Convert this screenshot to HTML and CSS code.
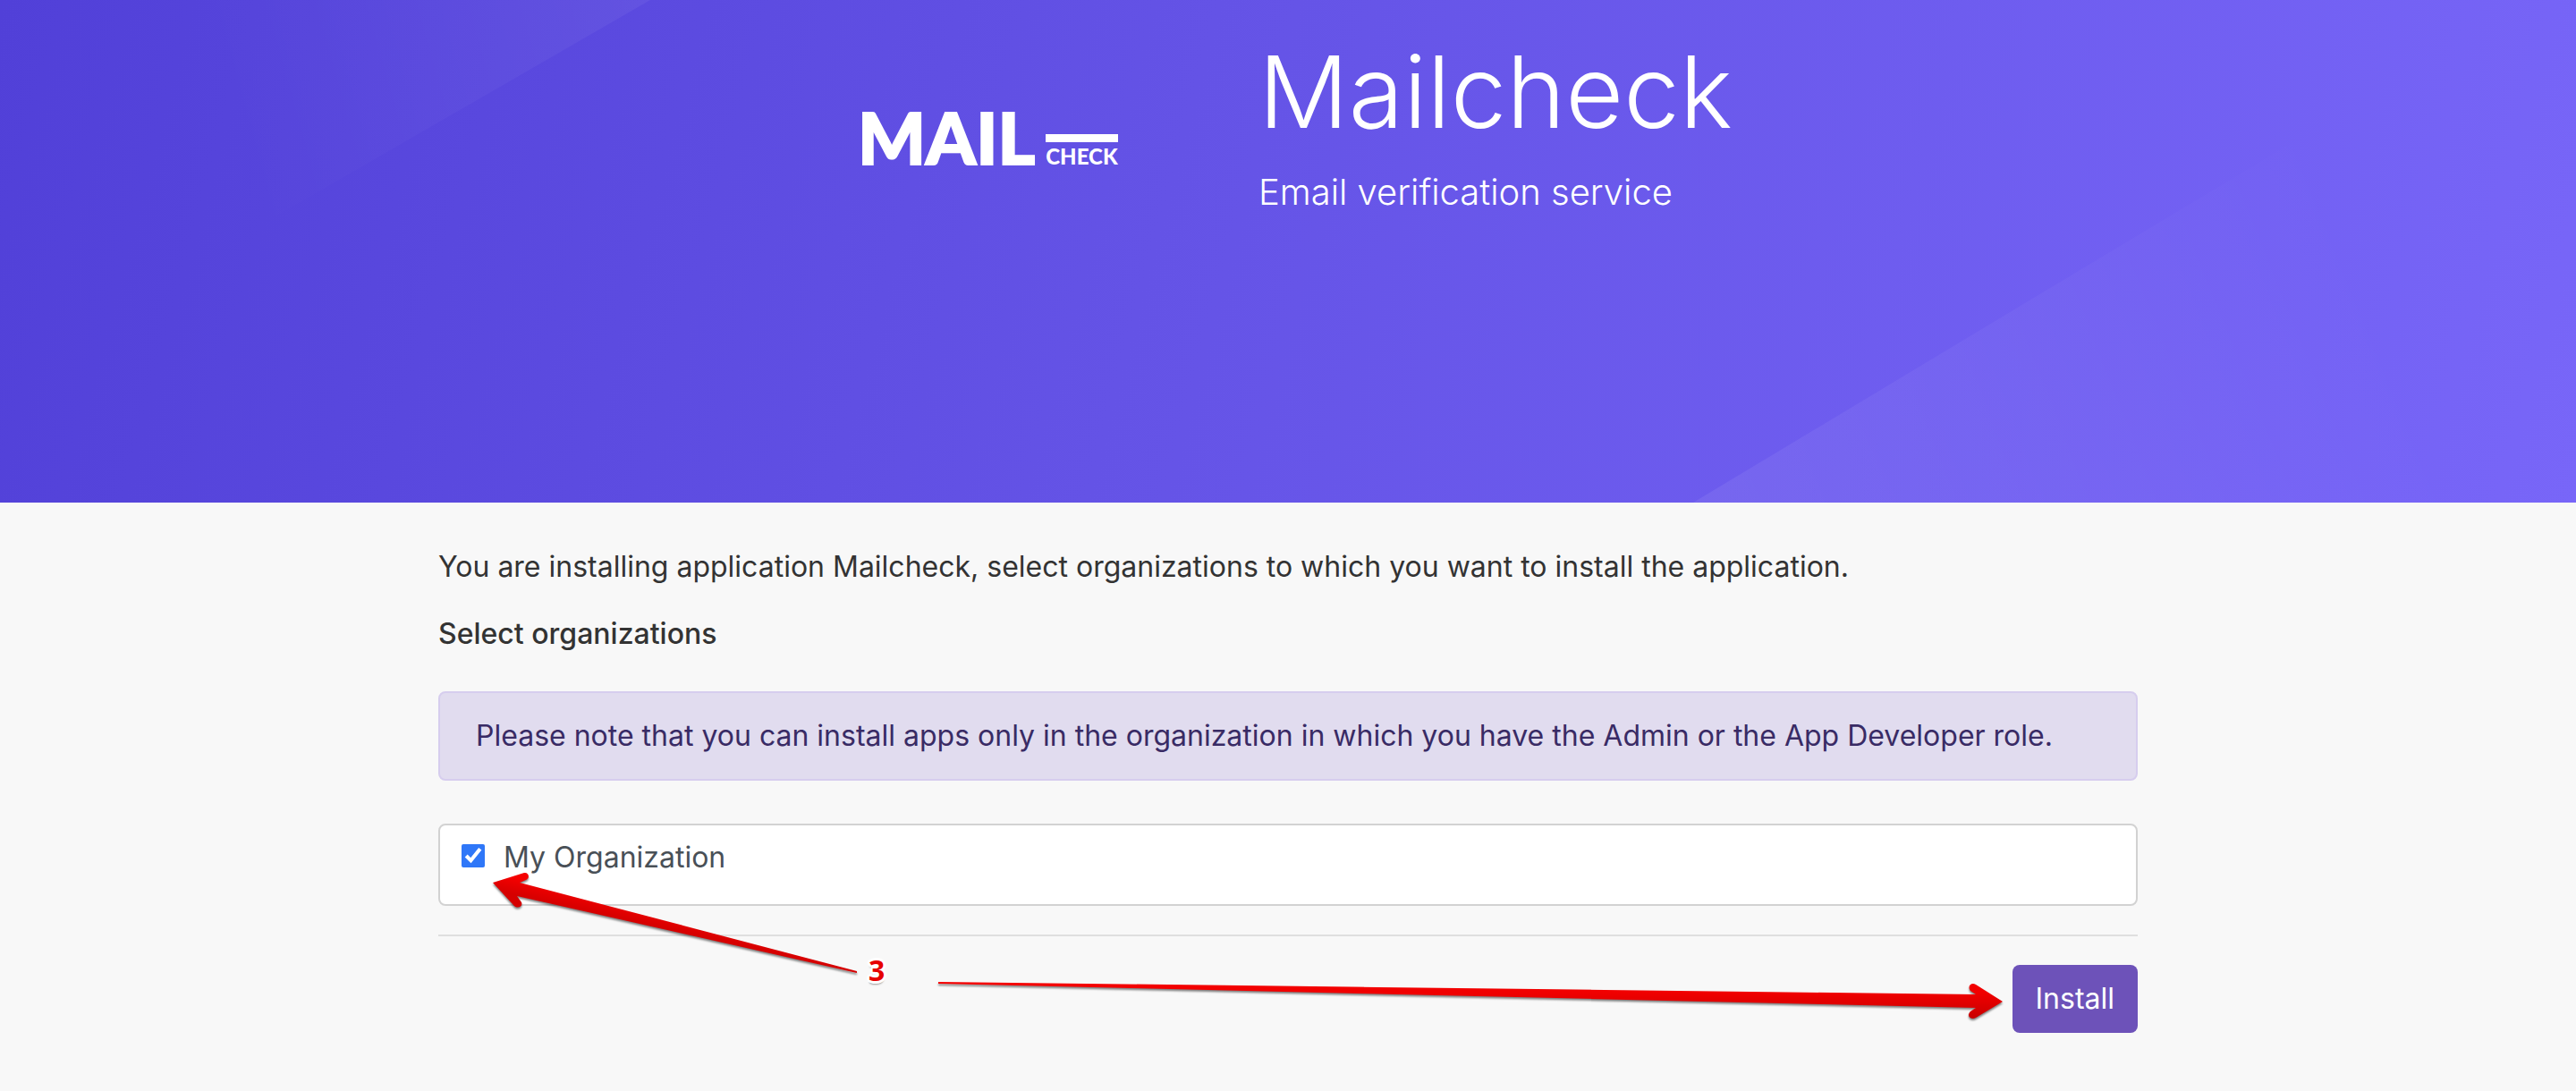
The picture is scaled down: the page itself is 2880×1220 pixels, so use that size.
FILE: index.html
```html
<!DOCTYPE html>
<html lang="en">
<head>
<meta charset="utf-8">
<title>Install Mailcheck</title>
<link rel="stylesheet" href="styles.css">
</head>
<body>
<header class="hero">
  <svg class="hero-shapes" viewBox="0 0 2880 562" preserveAspectRatio="none" aria-hidden="true">
    <defs>
      <linearGradient id="fadeLeft" gradientUnits="userSpaceOnUse" x1="727" y1="0" x2="250" y2="130">
        <stop offset="0" stop-color="#fff" stop-opacity=".05"/>
        <stop offset="1" stop-color="#fff" stop-opacity="0"/>
      </linearGradient>
      <linearGradient id="fadeRight" gradientUnits="userSpaceOnUse" x1="1900" y1="562" x2="2640" y2="260">
        <stop offset="0" stop-color="#fff" stop-opacity=".07"/>
        <stop offset="1" stop-color="#fff" stop-opacity="0"/>
      </linearGradient>
    </defs>
    <path d="M0 0H727L0 420Z" fill="url(#fadeLeft)"/>
    <path d="M1893 562L2828 0H2880V562Z" fill="url(#fadeRight)"/>
  </svg>
  <div class="hero-inner">
    <div class="logo">
      <span class="logo-main">MAIL</span>
      <span class="logo-side">CHECK</span>
    </div>
    <div class="hero-text">
      <h1>Mailcheck</h1>
      <p>Email verification service</p>
    </div>
  </div>
</header>
<main class="content">
  <p class="intro">You are installing application Mailcheck, select organizations to which you want to install the application.</p>
  <h2>Select organizations</h2>
  <div class="alert">Please note that you can install apps only in the organization in which you have the Admin or the App Developer role.</div>
  <form class="install-form">
    <div class="org-card">
      <input type="checkbox" id="org" checked>
      <label for="org">My Organization</label>
    </div>
    <hr>
    <div class="actions">
      <button type="button">Install</button>
    </div>
    <svg class="arrow arrow-left" width="480" height="170" viewBox="0 0 480 170" aria-hidden="true">
      <defs>
        <linearGradient id="shadeLeft" gradientUnits="userSpaceOnUse" x1="264" y1="100" x2="260" y2="118">
          <stop offset="0" stop-color="#f50000"/>
          <stop offset="1" stop-color="#d60000"/>
        </linearGradient>
      </defs>
      <path d="M61 66L96 55C101 54 103 61 98 63L91 66L468 165V167L88 81L93 88C95 93 88 96 84 91Z" fill="url(#shadeLeft)"/>
    </svg>
    <span class="step">3</span>
    <svg class="arrow arrow-right" width="1200" height="50" viewBox="0 0 1200 50" aria-hidden="true">
      <defs>
        <linearGradient id="shadeRight" x1="0" y1="0" x2="0" y2="1">
          <stop offset="0" stop-color="#f50000"/>
          <stop offset=".3" stop-color="#f00000"/>
          <stop offset="1" stop-color="#c80000"/>
        </linearGradient>
      </defs>
      <path d="M10 2L1170 16L1164 12C1160 7 1165 2 1170 5L1200 24L1170 42C1164 45 1159 40 1164 35L1170 31L10 4Z" fill="url(#shadeRight)"/>
    </svg>
  </form>
</main>
</body>
</html>
```
FILE: styles.css
```css
* { box-sizing: border-box; }

body {
  margin: 0;
  background: #f8f8f8;
  color: #333;
  font-family: Inter, "Liberation Sans", sans-serif;
  font-size: 32px;
  line-height: 48px;
}

h1, h2, p { margin: 0; }

.hero {
  position: relative;
  min-height: 562px;
  padding: 36px 0;
  background: linear-gradient(105deg, #5140d8 0%, #6453e6 45%, #7866f8 100%);
  color: #fff;
}

.hero-shapes {
  position: absolute;
  inset: 0;
  width: 100%;
  height: 100%;
}

.hero-inner {
  position: relative;
  display: grid;
  grid-template-columns: 384px 1fr;
  column-gap: 60px;
  max-width: 1954px;
  margin: 0 auto;
  padding-left: 496px;
}

.logo {
  display: flex;
  align-items: flex-end;
  gap: 12px;
  height: 155px;
  font-family: Lato, sans-serif;
  font-weight: 900;
}

.logo-main {
  font-size: 80px;
  line-height: 76px;
  -webkit-text-stroke: 2px #fff;
}

.logo-side {
  border-top: 9px solid #fff;
  font-size: 24px;
  line-height: 32px;
}

.hero-text {
  padding-left: 4px;
}

.hero-text h1 {
  font-size: 112px;
  font-weight: 300;
  line-height: 132px;
}

.hero-text p {
  margin-top: 17px;
  font-size: 40px;
  font-weight: 300;
  line-height: 60px;
}

.content {
  max-width: 1960px;
  margin: 0 auto;
  padding: 48px 30px 64px;
}

.content h2 {
  margin-top: 27px;
  font-size: 32px;
  font-weight: 500;
  line-height: 48px;
}

.alert {
  margin-top: 40px;
  padding: 24px 40px;
  border: 2px solid #d6cdee;
  border-radius: 8px;
  background: #e1dcef;
  color: #392b65;
}

.install-form {
  position: relative;
  margin-top: 48px;
}

.org-card {
  display: flex;
  align-items: flex-start;
  gap: 21px;
  min-height: 92px;
  padding: 12px 24px;
  border: 2px solid #d2d2d2;
  border-radius: 8px;
  background: #fff;
  color: #495057;
}

.org-card input {
  width: 26px;
  height: 26px;
  margin: 9px 0;
  accent-color: #2f77f8;
}

.install-form hr {
  margin: 32px 0;
  border: 0;
  border-top: 2px solid #dfdfdf;
}

.actions {
  display: flex;
  justify-content: flex-end;
}

.actions button {
  padding: 14px 26px;
  border: 0;
  border-radius: 8px;
  background: #6d52b9;
  color: #fff;
  font: inherit;
}

.arrow {
  position: absolute;
  overflow: visible;
  filter: drop-shadow(0 2px 1px rgba(0, 0, 0, .5));
  pointer-events: none;
}

.arrow-left { left: 0; top: 0; }

.arrow-right { right: 151px; top: 175px; }

.step {
  position: absolute;
  left: 481px;
  top: 140px;
  color: #e60000;
  font-family: "Open Sans", sans-serif;
  font-weight: 700;
  text-shadow: 3px 0 #fff, -3px 0 #fff, 0 3px #fff, 0 -3px #fff, 2px 2px #fff, -2px 2px #fff, 2px -2px #fff, -2px -2px #fff, 0 4px 2px #999;
}
```
